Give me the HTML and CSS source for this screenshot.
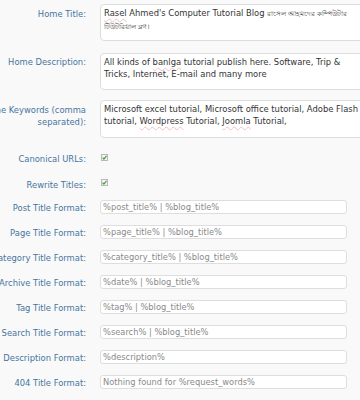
FILE: index.html
```html
<!DOCTYPE html>
<html>
<head>
<meta charset="utf-8">
<title>SEO Options</title>
<link rel="stylesheet" href="styles.css">
</head>
<body>
<div class="form">
  <div class="row area r1">
    <div class="label"><span>Home Title:</span></div>
    <div class="textbox"><span class="spell">Rasel</span> Ahmed's Computer Tutorial Blog <span class="bn">রাসেল আহমদের কম্পিউটার</span><br><span class="bn">টিউটরিয়াল ব্লগ।</span></div>
  </div>
  <div class="row area r2">
    <div class="label"><span>Home Description:</span></div>
    <div class="textbox">All kinds of <span class="spell">banlga</span> tutorial publish here. Software, Trip &amp;<br>Tricks, Internet, E-mail and many more</div>
  </div>
  <div class="row area r3">
    <div class="label"><span>Home Keywords (comma<br>separated):</span></div>
    <div class="textbox tall">Microsoft excel tutorial, Microsoft office tutorial, Adobe Flash<br>tutorial, <span class="spell">Wordpress</span> Tutorial, <span class="spell">Joomla</span> Tutorial,</div>
  </div>
  <div class="row check r4">
    <div class="label"><span>Canonical URLs:</span></div>
    <div class="cbwrap"><span class="checkbox c1"><svg width="7" height="7" viewBox="0 0 7 7"><path d="M1.6 3.7 L2.9 5.1 L5.5 1.9" fill="none" stroke="#3a9b2c" stroke-width="1.1"/></svg></span></div>
  </div>
  <div class="row check r5">
    <div class="label"><span>Rewrite Titles:</span></div>
    <div class="cbwrap"><span class="checkbox"><svg width="7" height="7" viewBox="0 0 7 7"><path d="M1.6 3.7 L2.9 5.1 L5.5 1.9" fill="none" stroke="#3a9b2c" stroke-width="1.1"/></svg></span></div>
  </div>
  <div class="row field first">
    <div class="label"><span>Post Title Format:</span></div>
    <input class="text" type="text" value="%post_title% | %blog_title%">
  </div>
  <div class="row field">
    <div class="label"><span>Page Title Format:</span></div>
    <input class="text" type="text" value="%page_title% | %blog_title%">
  </div>
  <div class="row field">
    <div class="label"><span>Category Title Format:</span></div>
    <input class="text" type="text" value="%category_title% | %blog_title%">
  </div>
  <div class="row field">
    <div class="label"><span>Archive Title Format:</span></div>
    <input class="text" type="text" value="%date% | %blog_title%">
  </div>
  <div class="row field">
    <div class="label"><span>Tag Title Format:</span></div>
    <input class="text" type="text" value="%tag% | %blog_title%">
  </div>
  <div class="row field">
    <div class="label"><span>Search Title Format:</span></div>
    <input class="text" type="text" value="%search% | %blog_title%">
  </div>
  <div class="row field">
    <div class="label"><span>Description Format:</span></div>
    <input class="text" type="text" value="%description%">
  </div>
  <div class="row field">
    <div class="label"><span>404 Title Format:</span></div>
    <input class="text" type="text" value="Nothing found for %request_words%">
  </div>
</div>
</body>
</html>
```
FILE: styles.css
```css
html, body {
  margin: 0;
  padding: 0;
  overflow: hidden;
  background: #f9f9f9;
}
body {
  width: 360px;
  height: 400px;
  font-family: "DejaVu Sans", Verdana, sans-serif;
  font-size: 8.4px;
  line-height: 12px;
}
.form {
  display: flex;
  flex-direction: column;
  padding-top: 4px;
}
.row {
  display: grid;
  grid-template-columns: 86px 270px;
  column-gap: 14px;
  align-items: start;
}
.label {
  display: flex;
  justify-content: flex-end;
  color: #45759e;
  white-space: nowrap;
  text-align: right;
}
.label span {
  display: block;
}
.textbox {
  box-sizing: border-box;
  height: 37px;
  border: 1px solid #dddddd;
  border-radius: 4px;
  background: #ffffff;
  padding: 2px 3px;
  color: #333333;
  white-space: nowrap;
  overflow: hidden;
}
.textbox.tall {
  height: 38px;
}
.spell {
  text-decoration: underline wavy #f5c0c0;
  text-decoration-thickness: 1px;
  text-underline-offset: 2px;
}
.bn {
  font-size: 6.6px;
  color: #444444;
}
.r1 .label { padding-top: 4px; }
.r2 { margin-top: 12px; }
.r2 .label { padding-top: 3px; }
.r3 { margin-top: 10px; }
.r3 .label { padding-top: 4px; }
.r4 { margin-top: 15px; }
.r5 { margin-top: 14px; }
.cbwrap {
  padding-left: 1px;
  height: 12px;
}
.checkbox {
  display: block;
  width: 7px;
  height: 7px;
  box-sizing: border-box;
  border: 1px solid #b9b9b9;
  background: #f3f3f3;
  position: relative;
}
.checkbox.c1 {
  margin-top: 1px;
}
.checkbox svg {
  position: absolute;
  left: -1px;
  top: -1px;
}
.field {
  margin-top: 11px;
}
.field.first {
  margin-top: 9px;
}
.field .label {
  padding-top: 2px;
}
.text {
  box-sizing: border-box;
  width: 247px;
  height: 14px;
  margin: 0;
  padding: 0 2px;
  border: 1px solid #dedede;
  border-radius: 3px;
  background: #ffffff;
  color: #8a8a8a;
  font-family: "DejaVu Sans", Verdana, sans-serif;
  font-size: 8.3px;
  line-height: 12px;
  outline: none;
}
```
